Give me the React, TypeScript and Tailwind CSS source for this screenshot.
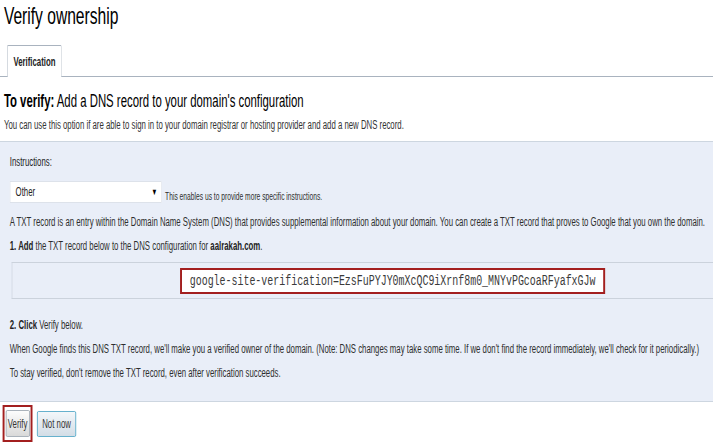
import React from 'react';

// The reference is horizontally squeezed, so the page is laid out wider and scaled on x.
const sans = { fontFamily: '"Liberation Sans", Arial, sans-serif' };
const mono = { fontFamily: '"Liberation Mono", "Courier New", monospace' };

export default function App() {
    return (
        <div className="w-[713px] h-[443px] overflow-hidden bg-white">
            <div className="w-[1097px] origin-top-left scale-x-[0.65] text-[#262626] whitespace-nowrap" style={sans}>
                {/* Page title */}
                <h1 className="pl-[6px] pt-[2px] text-[24px] leading-[28px] text-black">Verify ownership</h1>

                {/* Tabs */}
                <div className="mt-[15px] h-[32px] flex items-end border-b border-[#a9b3bf]">
                    <div className="ml-[11px] -mb-px h-[32px] w-[84px] bg-white border-t border-[#a9b3bf] border-x-[1.5px] rounded-t-[2px] flex items-center justify-center text-[12px] font-bold text-[#222]">
                        Verification
                    </div>
                </div>

                {/* Heading */}
                <h2 className="pl-[6px] mt-[13px] text-[17.5px] leading-[22px] text-black">
                    <span className="font-bold">To verify:</span> Add a DNS record to your domain's configuration
                </h2>
                <p className="pl-[6px] mt-[6px] text-[12px] leading-[14px] text-[#333]">
                    You can use this option if are able to sign in to your domain registrar or hosting provider and add a new DNS record.
                </p>

                {/* Instructions panel */}
                <div className="mt-[9px] bg-[#e9eef8] border-y border-[#cdd6e0] pl-[15px] pb-[21px] text-[12px] leading-[14px] text-[#2e2e2e]">
                    <div className="pt-[13px] text-[#222]">Instructions:</div>
                    <div className="mt-[12px] flex items-end gap-[5px]">
                        <div className="w-[234px] h-[22px] bg-white border-y border-x-[1.5px] border-[#dde2ea] flex items-center justify-between pl-[8px] pr-[6px]">
                            <span className="text-[#222]">Other</span>
                            <span className="text-[9px] text-black">▼</span>
                        </div>
                        <span className="text-[10.3px] leading-[12px]">This enables us to provide more specific instructions.</span>
                    </div>
                    <p className="mt-[12px]">
                        A TXT record is an entry within the Domain Name System (DNS) that provides supplemental information about your domain. You can create a TXT record that proves to Google that you own the domain.
                    </p>
                    <p className="mt-[10px]">
                        <span className="font-bold text-[#222]">1. Add</span> the TXT record below to the DNS configuration for <span className="font-bold text-[#222]">aalrakah.com</span>.
                    </p>
                    <div className="mt-[9px] ml-[3px] h-[37px] border-y border-l-[1.5px] border-[#cbd2dc] flex items-center pl-[258px]">
                        <div className="w-[654px] h-[26px] bg-white border-y-2 border-x-[3px] border-[#a31f1f] flex items-center justify-center text-[15.3px] text-[#3a3a3a]" style={mono}>
                            google-site-verification=EzsFuPYJY0mXcQC9iXrnf8m0_MNYvPGcoaRFyafxGJw
                        </div>
                    </div>
                    <p className="mt-[19px]">
                        <span className="font-bold text-[#222]">2. Click</span> Verify below.
                    </p>
                    <p className="mt-[10px]">
                        When Google finds this DNS TXT record, we'll make you a verified owner of the domain. (Note: DNS changes may take some time. If we don't find the record immediately, we'll check for it periodically.)
                    </p>
                    <p className="mt-[10px]">
                        To stay verified, don't remove the TXT record, even after verification succeeds.
                    </p>
                </div>

                {/* Actions */}
                <div className="mt-[3px] pl-[4px] flex items-center gap-[7px]">
                    <div className="border-y-2 border-x-[3px] border-[#a31f1f] py-[3px] px-[1.5px]">
                        <button className="h-[27px] w-[37px] text-[12px] text-[#333] bg-gradient-to-b from-[#fdfdfd] to-[#d9d9d9] border-y border-x-[1.5px] border-[#98a2ac] rounded-[2px]" style={sans}>
                            Verify
                        </button>
                    </div>
                    <button className="h-[26px] w-[60px] text-[12px] text-[#333] bg-gradient-to-b from-[#f3f7fa] to-[#d3dde6] border-y border-x-[1.5px] border-[#46a0c2] rounded-[2px]" style={sans}>
                        Not now
                    </button>
                </div>
            </div>
        </div>
    );
}
